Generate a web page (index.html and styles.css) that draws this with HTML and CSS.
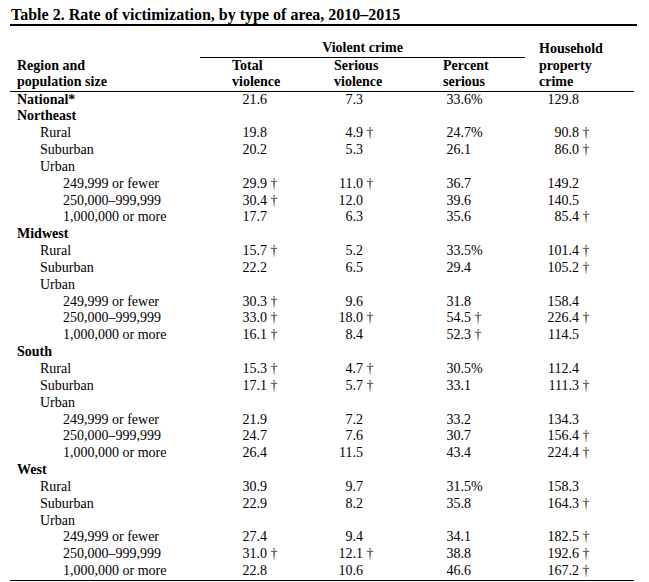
FILE: index.html
```html
<!DOCTYPE html>
<html lang="en">
<head>
<meta charset="utf-8">
<title>Table 2. Rate of victimization, by type of area, 2010–2015</title>
<link rel="stylesheet" href="styles.css">
</head>
<body>
<div class="page">
  <div class="title">Table 2. Rate of victimization, by type of area, 2010–2015</div>
  <table class="grid">
    <colgroup>
      <col class="w-label"><col class="w-total"><col class="w-serious"><col class="w-pct"><col class="w-hh">
    </colgroup>
    <thead>
      <tr>
        <th rowspan="2" class="h-label">Region and<br>population size</th>
        <th colspan="3" class="h-group">Violent crime</th>
        <th rowspan="2" class="c-hh">Household<br>property<br>crime</th>
      </tr>
      <tr>
        <th class="c-total">Total<br>violence</th>
        <th class="c-serious">Serious<br>violence</th>
        <th class="c-pct">Percent<br>serious</th>
      </tr>
    </thead>
    <tbody>
      <tr><td class="l0">National*</td><td class="c-total"><span class="n">21.6</span></td><td class="c-serious"><span class="n">7.3</span></td><td class="c-pct"><span class="n">33.6</span>%</td><td class="c-hh"><span class="n">129.8</span></td></tr>
      <tr><td class="l0">Northeast</td><td></td><td></td><td></td><td></td></tr>
      <tr><td class="l1">Rural</td><td class="c-total"><span class="n">19.8</span></td><td class="c-serious"><span class="n">4.9</span> <span class="d">†</span></td><td class="c-pct"><span class="n">24.7</span>%</td><td class="c-hh"><span class="n">90.8</span> <span class="d">†</span></td></tr>
      <tr><td class="l1">Suburban</td><td class="c-total"><span class="n">20.2</span></td><td class="c-serious"><span class="n">5.3</span></td><td class="c-pct"><span class="n">26.1</span></td><td class="c-hh"><span class="n">86.0</span> <span class="d">†</span></td></tr>
      <tr><td class="l1">Urban</td><td></td><td></td><td></td><td></td></tr>
      <tr><td class="l2">249,999 or fewer</td><td class="c-total"><span class="n">29.9</span> <span class="d">†</span></td><td class="c-serious"><span class="n">11.0</span> <span class="d">†</span></td><td class="c-pct"><span class="n">36.7</span></td><td class="c-hh"><span class="n">149.2</span></td></tr>
      <tr><td class="l2">250,000–999,999</td><td class="c-total"><span class="n">30.4</span> <span class="d">†</span></td><td class="c-serious"><span class="n">12.0</span></td><td class="c-pct"><span class="n">39.6</span></td><td class="c-hh"><span class="n">140.5</span></td></tr>
      <tr><td class="l2">1,000,000 or more</td><td class="c-total"><span class="n">17.7</span></td><td class="c-serious"><span class="n">6.3</span></td><td class="c-pct"><span class="n">35.6</span></td><td class="c-hh"><span class="n">85.4</span> <span class="d">†</span></td></tr>
      <tr><td class="l0">Midwest</td><td></td><td></td><td></td><td></td></tr>
      <tr><td class="l1">Rural</td><td class="c-total"><span class="n">15.7</span> <span class="d">†</span></td><td class="c-serious"><span class="n">5.2</span></td><td class="c-pct"><span class="n">33.5</span>%</td><td class="c-hh"><span class="n">101.4</span> <span class="d">†</span></td></tr>
      <tr><td class="l1">Suburban</td><td class="c-total"><span class="n">22.2</span></td><td class="c-serious"><span class="n">6.5</span></td><td class="c-pct"><span class="n">29.4</span></td><td class="c-hh"><span class="n">105.2</span> <span class="d">†</span></td></tr>
      <tr><td class="l1">Urban</td><td></td><td></td><td></td><td></td></tr>
      <tr><td class="l2">249,999 or fewer</td><td class="c-total"><span class="n">30.3</span> <span class="d">†</span></td><td class="c-serious"><span class="n">9.6</span></td><td class="c-pct"><span class="n">31.8</span></td><td class="c-hh"><span class="n">158.4</span></td></tr>
      <tr><td class="l2">250,000–999,999</td><td class="c-total"><span class="n">33.0</span> <span class="d">†</span></td><td class="c-serious"><span class="n">18.0</span> <span class="d">†</span></td><td class="c-pct"><span class="n">54.5</span> <span class="d">†</span></td><td class="c-hh"><span class="n">226.4</span> <span class="d">†</span></td></tr>
      <tr><td class="l2">1,000,000 or more</td><td class="c-total"><span class="n">16.1</span> <span class="d">†</span></td><td class="c-serious"><span class="n">8.4</span></td><td class="c-pct"><span class="n">52.3</span> <span class="d">†</span></td><td class="c-hh"><span class="n">114.5</span></td></tr>
      <tr><td class="l0">South</td><td></td><td></td><td></td><td></td></tr>
      <tr><td class="l1">Rural</td><td class="c-total"><span class="n">15.3</span> <span class="d">†</span></td><td class="c-serious"><span class="n">4.7</span> <span class="d">†</span></td><td class="c-pct"><span class="n">30.5</span>%</td><td class="c-hh"><span class="n">112.4</span></td></tr>
      <tr><td class="l1">Suburban</td><td class="c-total"><span class="n">17.1</span> <span class="d">†</span></td><td class="c-serious"><span class="n">5.7</span> <span class="d">†</span></td><td class="c-pct"><span class="n">33.1</span></td><td class="c-hh"><span class="n">111.3</span> <span class="d">†</span></td></tr>
      <tr><td class="l1">Urban</td><td></td><td></td><td></td><td></td></tr>
      <tr><td class="l2">249,999 or fewer</td><td class="c-total"><span class="n">21.9</span></td><td class="c-serious"><span class="n">7.2</span></td><td class="c-pct"><span class="n">33.2</span></td><td class="c-hh"><span class="n">134.3</span></td></tr>
      <tr><td class="l2">250,000–999,999</td><td class="c-total"><span class="n">24.7</span></td><td class="c-serious"><span class="n">7.6</span></td><td class="c-pct"><span class="n">30.7</span></td><td class="c-hh"><span class="n">156.4</span> <span class="d">†</span></td></tr>
      <tr><td class="l2">1,000,000 or more</td><td class="c-total"><span class="n">26.4</span></td><td class="c-serious"><span class="n">11.5</span></td><td class="c-pct"><span class="n">43.4</span></td><td class="c-hh"><span class="n">224.4</span> <span class="d">†</span></td></tr>
      <tr><td class="l0">West</td><td></td><td></td><td></td><td></td></tr>
      <tr><td class="l1">Rural</td><td class="c-total"><span class="n">30.9</span></td><td class="c-serious"><span class="n">9.7</span></td><td class="c-pct"><span class="n">31.5</span>%</td><td class="c-hh"><span class="n">158.3</span></td></tr>
      <tr><td class="l1">Suburban</td><td class="c-total"><span class="n">22.9</span></td><td class="c-serious"><span class="n">8.2</span></td><td class="c-pct"><span class="n">35.8</span></td><td class="c-hh"><span class="n">164.3</span> <span class="d">†</span></td></tr>
      <tr><td class="l1">Urban</td><td></td><td></td><td></td><td></td></tr>
      <tr><td class="l2">249,999 or fewer</td><td class="c-total"><span class="n">27.4</span></td><td class="c-serious"><span class="n">9.4</span></td><td class="c-pct"><span class="n">34.1</span></td><td class="c-hh"><span class="n">182.5</span> <span class="d">†</span></td></tr>
      <tr><td class="l2">250,000–999,999</td><td class="c-total"><span class="n">31.0</span> <span class="d">†</span></td><td class="c-serious"><span class="n">12.1</span> <span class="d">†</span></td><td class="c-pct"><span class="n">38.8</span></td><td class="c-hh"><span class="n">192.6</span> <span class="d">†</span></td></tr>
      <tr class="last"><td class="l2">1,000,000 or more</td><td class="c-total"><span class="n">22.8</span></td><td class="c-serious"><span class="n">10.6</span></td><td class="c-pct"><span class="n">46.6</span></td><td class="c-hh"><span class="n">167.2</span> <span class="d">†</span></td></tr>
    </tbody>
  </table>
</div>
</body>
</html>
```
FILE: styles.css
```css
html, body {
  margin: 0;
  padding: 0;
  background: #fff;
}

body {
  font-family: "Liberation Serif", "Times New Roman", serif;
  color: #000;
}

.page {
  padding: 6px 0 0 10px;
}

.title {
  width: 626px;
  padding-left: 1px;
  font-size: 16px;
  line-height: 18px;
  font-weight: bold;
  border-bottom: 2px solid #000;
}

.grid {
  width: 624px;
  margin-top: 14px;
  border-collapse: collapse;
  table-layout: fixed;
  font-size: 14px;
}

.w-label { width: 190px; }
.w-total { width: 122px; }
.w-serious { width: 108px; }
.w-pct { width: 95px; }
.w-hh { width: 109px; }

.grid th {
  padding: 0;
  font-weight: bold;
  text-align: left;
  vertical-align: bottom;
  line-height: 16.5px;
  white-space: nowrap;
  border-bottom: 1px solid #000;
}

.grid th.h-group {
  text-align: center;
}

.grid th.h-label {
  padding-left: 7px;
}

.grid td {
  padding: 0;
  line-height: 16.85px;
  white-space: nowrap;
}

.grid .last td {
  border-bottom: 1px solid #000;
}

.l0 {
  padding-left: 7px !important;
  font-weight: bold;
}

.l1 {
  padding-left: 30px !important;
}

.l2 {
  padding-left: 53px !important;
}

.grid .c-total { padding-left: 32px; }
.grid .c-serious { padding-left: 12px; }
.grid .c-pct { padding-left: 13px; }
.grid .c-hh { padding-left: 14px; }

.n {
  display: inline-block;
  text-align: right;
}

.c-total .n { width: 35px; }
.c-serious .n { width: 29px; }
.c-pct .n { width: 28px; }
.c-hh .n { width: 40px; }

.d {
  color: #3a2818;
}
```
